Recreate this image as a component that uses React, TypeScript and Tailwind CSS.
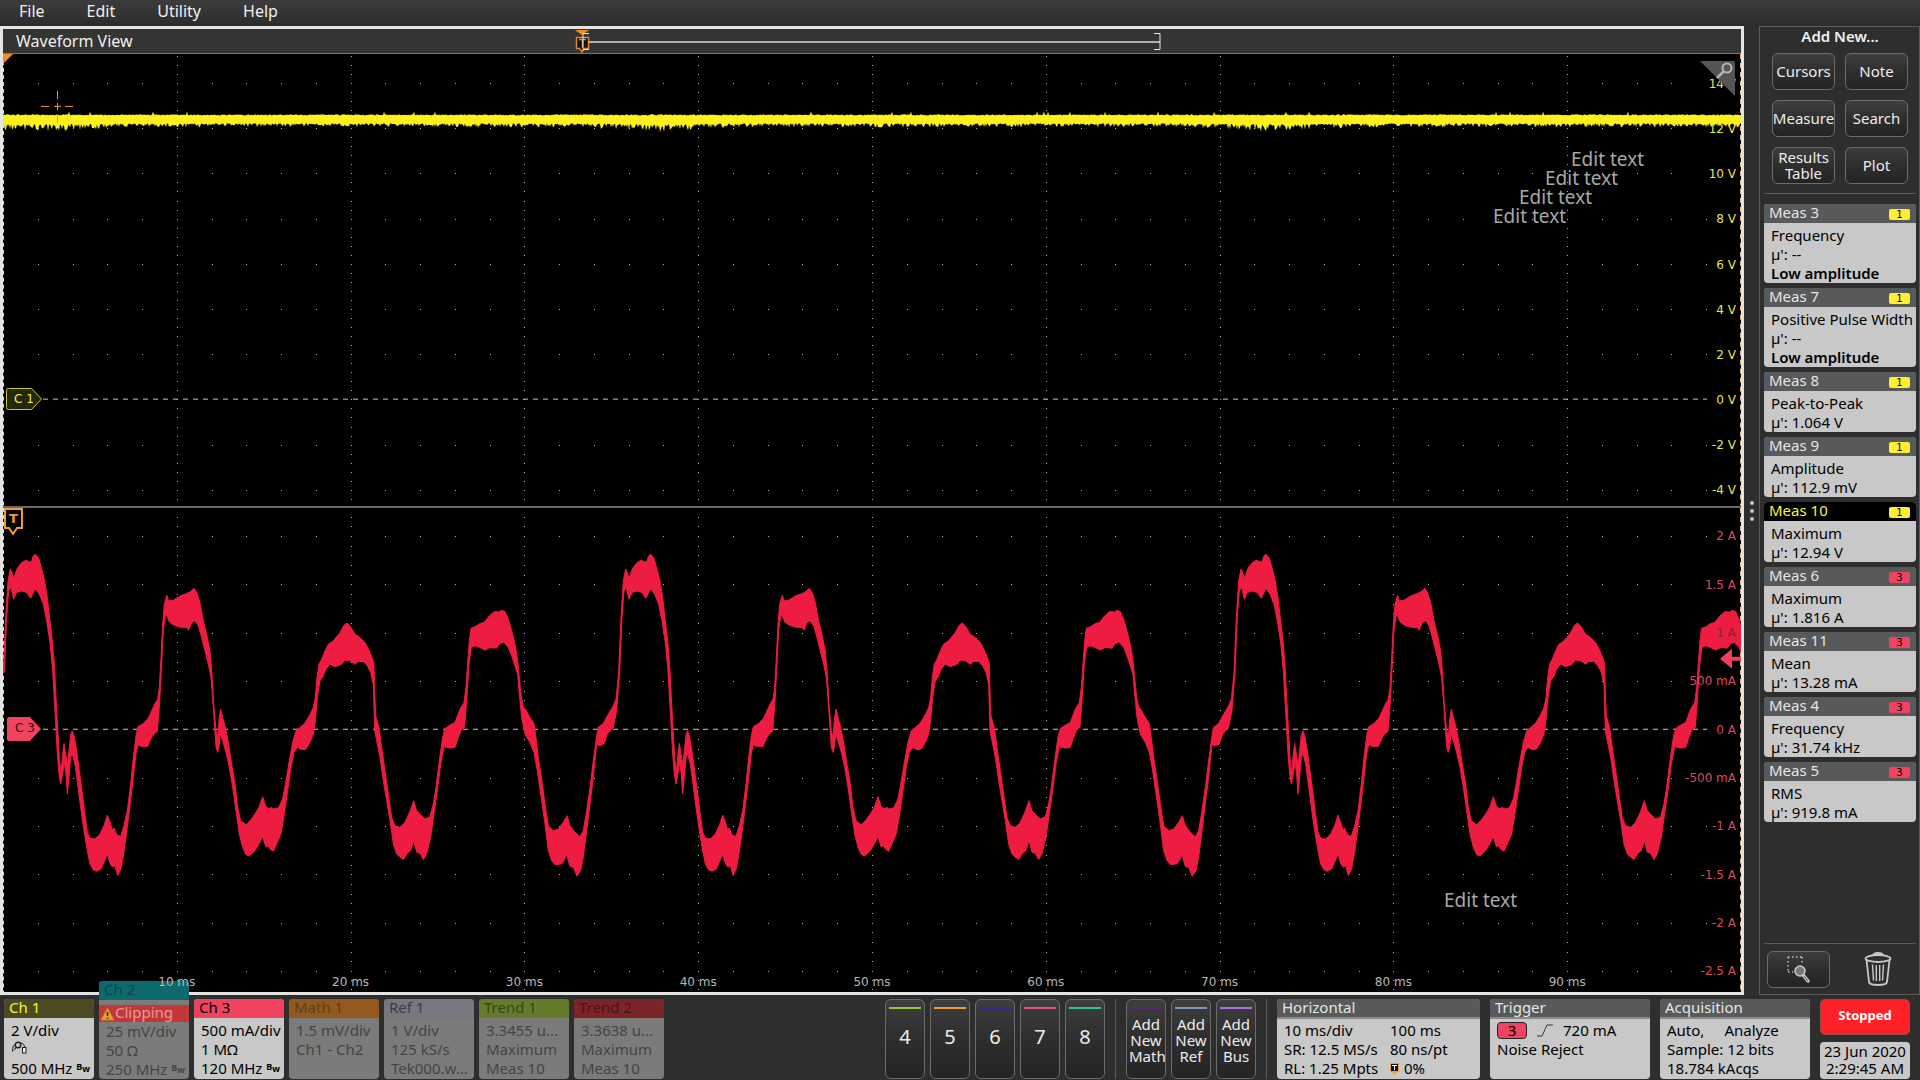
import React from 'react';
import clsx from 'clsx';

const DIVS = 10;
const PLOT_W = 1738;
const TOP_H = 452;
const BOTTOM_H = 485;

// One period of the current waveform: upper edge, then lower edge
const PERIOD = 1846;
const UPPER = [
  10, 545, 17, 380, 24, 270, 31, 234, 36, 245, 41, 262, 52, 232, 65, 215, 78, 208, 88, 213, 95, 212, 99, 196, 106, 190,
  115, 200, 122, 222, 133, 265, 142, 320, 150, 390, 157, 450, 163, 520, 168, 620, 173, 710, 178, 800, 183, 845, 188, 790,
  192, 758, 197, 790, 203, 822, 207, 780, 212, 732, 217, 720, 223, 738, 230, 780, 238, 840, 246, 900, 254, 965, 262, 1025,
  270, 1042, 285, 1045, 300, 1030, 312, 1005, 322, 973, 332, 1000, 337, 1018, 342, 1012, 350, 1032, 362, 1037, 372, 1005,
  382, 960, 392, 880, 400, 800, 408, 735, 414, 708, 430, 698, 445, 682, 455, 660, 465, 638, 473, 625, 478, 590, 483, 500,
  488, 400, 493, 340, 501, 313, 506, 330, 520, 328, 540, 315, 560, 308, 572, 302, 582, 292, 592, 308, 600, 335, 610, 390,
  622, 440, 630, 480, 636, 550, 641, 640, 648, 720, 653, 740, 657, 690, 662, 655, 668, 680, 675, 705, 685, 755, 695, 820,
  705, 880, 713, 950, 722, 990, 738, 1002, 752, 988, 765, 970, 777, 950, 788, 918, 797, 945, 805, 955, 815, 950, 820, 955,
  835, 952, 848, 925, 858, 870, 868, 810, 878, 755, 888, 720, 900, 710, 915, 697, 930, 672, 940, 650, 946, 620, 951, 560,
  957, 520, 965, 505, 975, 480, 985, 460, 1000, 450, 1020, 425, 1032, 403, 1041, 396, 1052, 408, 1065, 430, 1080, 440,
  1095, 455, 1108, 480, 1118, 505, 1122, 520, 1124, 600, 1127, 675, 1137, 710, 1145, 770, 1155, 840, 1165, 910, 1175, 980,
  1185, 1005, 1200, 1010, 1215, 995, 1230, 962, 1241, 930, 1250, 960, 1262, 972, 1275, 985, 1290, 978, 1300, 940, 1308, 890,
  1318, 810, 1328, 740, 1335, 713, 1350, 703, 1365, 695, 1380, 655, 1392, 635, 1398, 590, 1403, 520, 1408, 450, 1413, 412,
  1425, 408, 1440, 398, 1452, 395, 1468, 375, 1483, 362, 1490, 362, 1497, 364, 1503, 358, 1515, 362, 1525, 385, 1535, 420,
  1545, 460, 1552, 500, 1558, 560, 1564, 620, 1570, 648, 1578, 658, 1590, 680, 1602, 698, 1608, 740, 1615, 800, 1625, 865,
  1635, 940, 1645, 1005, 1660, 1020, 1675, 1015, 1690, 995, 1701, 975, 1710, 1005, 1725, 1025, 1740, 1038, 1750, 1020,
  1760, 960, 1770, 890, 1780, 810, 1788, 750, 1794, 710, 1810, 698, 1825, 670, 1840, 645, 1848, 625,
];
const LOWER = [
  13, 545, 20, 380, 26, 300, 33, 290, 41, 325, 50, 305, 65, 300, 80, 305, 92, 322, 103, 298, 108, 295, 118, 310, 130, 340,
  140, 390, 150, 455, 158, 540, 166, 680, 172, 790, 177, 850, 182, 880, 188, 850, 193, 815, 198, 850, 202, 910, 207, 860,
  212, 800, 217, 790, 225, 820, 233, 880, 242, 950, 252, 1020, 262, 1080, 270, 1120, 280, 1138, 290, 1142, 303, 1135,
  312, 1115, 322, 1090, 330, 1118, 338, 1130, 345, 1125, 353, 1155, 363, 1135, 372, 1085, 382, 1010, 392, 930, 400, 860,
  408, 790, 414, 762, 425, 767, 443, 767, 455, 740, 462, 730, 472, 722, 478, 650, 484, 540, 490, 420, 496, 375, 500, 372,
  508, 393, 520, 402, 535, 408, 550, 410, 560, 410, 566, 418, 575, 395, 585, 390, 595, 405, 605, 440, 615, 480, 625, 520,
  633, 560, 640, 650, 648, 770, 653, 785, 657, 770, 661, 730, 668, 750, 678, 785, 688, 830, 698, 890, 708, 960, 718, 1030,
  728, 1070, 738, 1092, 748, 1096, 765, 1080, 777, 1060, 788, 1038, 797, 1068, 805, 1065, 810, 1075, 820, 1082, 830, 1060,
  843, 1030, 853, 970, 863, 900, 873, 830, 882, 785, 892, 770, 905, 777, 918, 775, 930, 755, 940, 730, 946, 690, 952, 620,
  960, 570, 968, 560, 978, 535, 990, 520, 1005, 528, 1025, 520, 1035, 508, 1050, 510, 1065, 520, 1075, 512, 1090, 512,
  1102, 525, 1112, 545, 1120, 580, 1124, 720, 1130, 750, 1140, 800, 1150, 870, 1160, 930, 1170, 990, 1180, 1060, 1190, 1090,
  1200, 1100, 1210, 1107, 1220, 1090, 1232, 1080, 1241, 1050, 1250, 1085, 1260, 1088, 1270, 1107, 1280, 1090, 1292, 1040,
  1302, 970, 1312, 900, 1322, 820, 1332, 768, 1350, 772, 1365, 770, 1375, 740, 1385, 715, 1394, 710, 1400, 630, 1407, 520,
  1414, 470, 1425, 465, 1440, 470, 1455, 478, 1470, 470, 1490, 472, 1500, 458, 1512, 455, 1525, 470, 1535, 495, 1545, 525,
  1553, 550, 1558, 610, 1565, 680, 1575, 730, 1590, 755, 1602, 785, 1612, 840, 1625, 930, 1635, 1000, 1645, 1080,
  1655, 1110, 1665, 1122, 1685, 1120, 1692, 1110, 1700, 1092, 1710, 1128, 1720, 1130, 1731, 1157, 1742, 1140, 1750, 1100,
  1760, 1020, 1770, 940, 1780, 860, 1790, 762, 1800, 765, 1812, 760, 1822, 730, 1840, 710, 1850, 660,
];

const toPairs = (flat: number[]) => {
  const out: string[] = [];
  for (let i = 0; i < flat.length; i += 2) out.push(`${flat[i]} ${flat[i + 1]}`);
  return out;
};

const currentPath = `M${[...toPairs(UPPER), `${PERIOD + 10} 545`, `${PERIOD + 13} 545`, ...toPairs(LOWER).reverse()].join('L')}Z`;

// Deterministic noise so the trace looks the same on every render
const noise = (n: number) => {
  const s = Math.sin(n * 127.1) * 43758.5453;
  return s - Math.floor(s);
};

const voltagePath = () => {
  const upper: string[] = [];
  const lower: string[] = [];
  for (let x = 0; x <= PLOT_W; x++) {
    const phase = ((x + 280) % 615) / 615;
    const burst = Math.max(0, 1 - Math.abs(phase - 0.52) * 7);
    const up = noise(x) > 0.985 ? 4 : noise(x + 0.5) * 1.2;
    const down = noise(x + 9000) ** 2 * (4 + burst * 4);
    upper.push(`${x} ${(61.5 - up).toFixed(1)}`);
    lower.push(`${x} ${(69.5 + down + burst).toFixed(1)}`);
  }
  return `M${[...upper, ...lower.reverse()].join('L')}Z`;
};

interface AxisLabel {
  text: string;
  y: number;
}

const makeAxis = (texts: string[], first: number, step: number): AxisLabel[] =>
  texts.map((text, i) => ({ text, y: first + i * step }));

const voltAxis = makeAxis(['14 V', '12 V', '10 V', '8 V', '6 V', '4 V', '2 V', '0 V', '-2 V', '-4 V'], 29, 45.2);
const ampAxis = makeAxis(
  ['2 A', '1.5 A', '1 A', '500 mA', '0 A', '-500 mA', '-1 A', '-1.5 A', '-2 A', '-2.5 A'],
  28,
  48.35,
);

const gridPath = (axis: AxisLabel[], step: number, height: number) => {
  let d = '';
  const dot = (x: number, y: number) => {
    d += `M${Math.round(x)} ${Math.round(y)}h1v1h-1z`;
  };
  const minor = step / 5;
  for (let i = 1; i < DIVS; i++) {
    for (let y = axis[0].y % minor; y < height; y += minor) dot((i * PLOT_W) / DIVS, y);
  }
  axis.forEach(({ text, y }) => {
    if (text.startsWith('0')) return;
    const last = text.replace('-', '').length > 3 ? 48 : 49;
    for (let i = 1; i <= last; i++) dot((i * PLOT_W) / 50, y);
  });
  return d;
};

interface PaneProps {
  axis: AxisLabel[];
  step: number;
  height: number;
  zero: number;
  labelClass: string;
  children: React.ReactNode;
}

const Pane: React.FC<PaneProps> = ({ axis, step, height, zero, labelClass, children }) => (
  <>
    <svg
      className="absolute inset-0 w-full h-full"
      viewBox={`0 0 ${PLOT_W} ${height}`}
      preserveAspectRatio="none"
      aria-hidden="true"
    >
      <path d={gridPath(axis, step, height)} fill="#b4b4b4" shapeRendering="crispEdges" />
      <path d={`M40 ${zero}H1704`} stroke="#c8c8c8" strokeDasharray="5 5" shapeRendering="crispEdges" />
      <path d={`M0.5 0V${height}`} stroke="#dcdcdc" strokeDasharray="4 3" />
      <path d={`M1737.5 0V${height}`} stroke="#f0b080" strokeDasharray="5 4" />
      {children}
    </svg>
    {axis.map(({ text, y }) => (
      <span
        key={text}
        className={clsx(
          'absolute right-[5px] -translate-y-[6px] text-[12px] leading-[14px]',
          text === '1 A' ? 'text-[#8c1c30]' : labelClass,
        )}
        style={{ top: `${(y / height) * 100}%` }}
      >
        {text}
      </span>
    ))}
  </>
);

const Note: React.FC<{ x: number; y: number }> = ({ x, y }) => (
  <span
    className="absolute font-['Noto_Sans'] text-[19px] leading-[18px] text-[#a8a8a8] whitespace-nowrap"
    style={{ left: `${(x / PLOT_W) * 100}%`, top: y }}
  >
    Edit text
  </span>
);

const WaveformView: React.FC = () => (
  <main className="flex-1 min-w-0 flex flex-col border-[3px] border-[#e4e4e2] bg-black">
    <header className="h-[25px] flex items-center bg-[#343432] border-b border-[#777]">
      <h1 className="w-[569px] pl-[13px] text-[16px] leading-[22px] text-[#f0f0f0]">Waveform View</h1>
      <svg width="590" height="24" viewBox="0 0 590 24" fill="none" aria-hidden="true">
        <path d="M3 1h14l-7 5z" fill="#f58b1f" />
        <path d="M4.500 8.500h12v11h-4l-2.500 3.500-2.500-3.500h-3z" fill="#111" stroke="#d9883a" strokeWidth="1.500" />
        <path d="M7 10.500h7M10.500 10.500v8" stroke="#d9883a" strokeWidth="1.500" />
        <path d="M17 4.500h-6v16h6" stroke="#e8e8e8" />
        <path d="M17 13H588" stroke="#b0b0ae" strokeWidth="2" />
        <path d="M582 4.500h6v16h-6" stroke="#e8e8e8" />
      </svg>
    </header>

    {/* Voltage pane */}
    <section className="relative grow-[452] basis-0 border-b-2 border-[#6a6a6a]" aria-label="Channel 1">
      <Pane axis={voltAxis} step={45.2} height={TOP_H} zero={345.5} labelClass="text-[#e6e64c]">
        <path d={voltagePath()} fill="#fff01c" />
        <path d="M0 0h10L0 10z" fill="#f58b1f" />
        <path
          d="M54.500 37v8M54.500 49v7M54.500 61v8M38 52.500h8M51 52.500h7M62 52.500h8"
          stroke="#f0963c"
          shapeRendering="crispEdges"
        />
      </Pane>
      <Note x={1568} y={96} />
      <Note x={1542} y={115} />
      <Note x={1516} y={134} />
      <Note x={1490} y={153} />
      <svg className="absolute left-[3px] top-[76.4%] -translate-y-1/2" width="37" height="23" viewBox="0 0 37 23">
        <path d="M2.500 1h23l10 10.500-10 10.500h-23q-2 0-2-2V3q0-2 2-2z" fill="#26260c" stroke="#c8c832" />
        <text x="8" y="15.500" fontSize="12" fill="#f0f050">C 1</text>
      </svg>
      <button className="absolute right-[6px] top-[7px]" aria-label="Zoom">
        <svg width="35" height="35" viewBox="0 0 35 35" fill="none">
          <path d="M0 0h33q2 0 2 2v33z" fill="#555" />
          <circle cx="27" cy="7" r="4.500" stroke="#b4b4b4" strokeWidth="2" />
          <path d="M23.500 10.500L17 17" stroke="#b4b4b4" strokeWidth="2.500" />
        </svg>
      </button>
    </section>

    {/* Current pane */}
    <section className="relative grow-[485] basis-0" aria-label="Channel 3">
      <Pane axis={ampAxis} step={48.35} height={BOTTOM_H} zero={221.5} labelClass="text-[#d94a60]">
        <g transform="translate(-3 -17) scale(0.33333)" fill="#ee1c40" stroke="#ee1c40" strokeWidth="3">
          {[0, 1, 2].map((n) => (
            <path key={n} d={currentPath} transform={`translate(${n * PERIOD} 0)`} />
          ))}
        </g>
        <path d="M1717 151l12-10v8h9v4h-9v8z" fill="#f0405c" />
      </Pane>
      <Note x={1441} y={383} />
      {['10', '20', '30', '40', '50', '60', '70', '80', '90'].map((t, i) => (
        <span
          key={t}
          className="absolute z-10 bottom-[3px] -translate-x-1/2 text-[12px] leading-[14px] text-[#b8b8b8] whitespace-nowrap"
          style={{ left: `${(i + 1) * 10}%` }}
        >
          {t} ms
        </span>
      ))}
      <svg className="absolute left-0 top-0" width="22" height="28" viewBox="0 0 22 28">
        <path d="M2 1h17v19h-5l-4 6-4-6H2z" fill="#000" stroke="#f09a3c" strokeWidth="2" />
        <text x="10.500" y="15" fontSize="13" fontWeight="bold" textAnchor="middle" fill="#f09a3c">T</text>
      </svg>
      <svg className="absolute left-[4px] top-[45.8%] -translate-y-1/2" width="35" height="24" viewBox="0 0 35 24">
        <path d="M2 0h21l11 12-11 12H2q-2 0-2-2V2q0-2 2-2z" fill="#f0435f" />
        <text x="8" y="15" fontSize="12" fill="#38060f">C 3</text>
      </svg>
    </section>
  </main>
);

const panelButton =
  'flex items-center justify-center rounded-[6px] border border-[#6c6c6c] bg-gradient-to-b from-[#3e3e3e] via-[#2e2e2e] to-[#242424] text-[#ececec]';

interface Meas {
  name: string;
  source: 1 | 3;
  lines: string[];
  warning?: string;
  active?: boolean;
}

const measurements: Meas[] = [
  { name: 'Meas 3', source: 1, lines: ['Frequency', "µ': --"], warning: 'Low amplitude' },
  { name: 'Meas 7', source: 1, lines: ['Positive Pulse Width', "µ': --"], warning: 'Low amplitude' },
  { name: 'Meas 8', source: 1, lines: ['Peak-to-Peak', "µ': 1.064 V"] },
  { name: 'Meas 9', source: 1, lines: ['Amplitude', "µ': 112.9 mV"] },
  { name: 'Meas 10', source: 1, lines: ['Maximum', "µ': 12.94 V"], active: true },
  { name: 'Meas 6', source: 3, lines: ['Maximum', "µ': 1.816 A"] },
  { name: 'Meas 11', source: 3, lines: ['Mean', "µ': 13.28 mA"] },
  { name: 'Meas 4', source: 3, lines: ['Frequency', "µ': 31.74 kHz"] },
  { name: 'Meas 5', source: 3, lines: ['RMS', "µ': 919.8 mA"] },
];

const MeasCard: React.FC<{ meas: Meas }> = ({ meas }) => (
  <section className="rounded-[4px] bg-[#c8c8c8] text-black">
    <header
      className={clsx(
        'h-[19px] pl-[5px] pr-[6px] flex items-start justify-between rounded-t-[4px] text-[15px] leading-[17px]',
        meas.active ? 'bg-black text-[#f5f53c]' : 'bg-[#58595b] text-[#e6e6e6]',
      )}
    >
      <h2>{meas.name}</h2>
      <span
        className={clsx(
          "w-[21px] h-[11px] mt-[5px] rounded-[2px] text-center font-['DejaVu_Sans'] text-[10px] leading-[11px] text-black",
          meas.source === 1 ? 'bg-[#ffee32]' : 'bg-[#f0435f]',
        )}
      >
        {meas.source}
      </span>
    </header>
    <div className="pl-[7px] pt-[3px] text-[15px] leading-[19px] whitespace-nowrap">
      {meas.lines.map((line) => (
        <p key={line}>{line}</p>
      ))}
      {meas.warning && <p className="font-semibold">{meas.warning}</p>}
    </div>
  </section>
);

const Sidebar: React.FC = () => (
  <aside className="w-[161px] shrink-0 flex flex-col border border-[#5c5c5c] pl-[4px] pr-[3px]">
    <h2 className="text-center text-[15px] leading-[18px] font-semibold text-[#f0f0f0]">Add New...</h2>
    <div className="mt-[8px] px-[8px] grid grid-cols-2 gap-[10px]">
      {['Cursors', 'Note', 'Measure', 'Search', 'Results Table', 'Plot'].map((label) => (
        <button key={label} className={clsx(panelButton, 'h-[37px] pb-px text-[15px] leading-[16px]')}>
          {label}
        </button>
      ))}
    </div>
    <hr className="mt-[9px] border-[#5c5c5c]" />
    <div className="mt-[10px] flex flex-col gap-[5px]">
      {measurements.map((m) => (
        <MeasCard key={m.name} meas={m} />
      ))}
    </div>
    <div className="mt-auto h-[51px] border-t border-[#5c5c5c] flex items-center gap-[34px] pl-[3px]">
      <button className={clsx(panelButton, 'w-[63px] h-[37px]')} aria-label="Zoom to area">
        <svg width="26" height="32" viewBox="0 0 26 32" fill="none">
          <path d="M2 4h14M2 4v15M16 4v8M2 19h5" stroke="#c0c0c0" strokeWidth="1.500" strokeDasharray="1.500 2.500" />
          <circle cx="14" cy="18" r="5" fill="#777" stroke="#c8c8c8" strokeWidth="1.500" />
          <path d="M17.500 22.500L22 28" stroke="#c8c8c8" strokeWidth="3.500" strokeLinecap="round" />
          <path d="M18 23L22 28" stroke="#555" strokeWidth="1" />
        </svg>
      </button>
      <button aria-label="Delete">
        <svg width="28" height="34" viewBox="0 0 28 34" fill="none" stroke="#c8c8c8" strokeWidth="1.800">
          <path d="M2.500 8l2.500 22q.5 3 9 3t9-3L25.500 8" />
          <ellipse cx="14" cy="6.500" rx="12.500" ry="3.500" />
          <path d="M9 4q0-3 5-3t5 3" />
          <path d="M8.500 12.500l1 16M12.300 13v16M15.700 13v16M19.500 12.500l-1 16" strokeWidth="1.400" />
        </svg>
      </button>
    </div>
  </aside>
);

interface BadgeProps {
  title: string;
  header: string;
  lines: React.ReactNode[];
  dim?: boolean;
}

const Bw = () => (
  <span className="ml-auto mr-[4px] flex text-[9px] font-bold">
    <span className="leading-[15px]">B</span>
    <span className="leading-[20px]">w</span>
  </span>
);

const Badge: React.FC<BadgeProps> = ({ title, header, lines, dim }) => (
  <section
    className={clsx(
      'w-[90px] h-[80px] shrink-0 rounded-[4px]',
      dim ? 'bg-[#7b7b7b] text-[#444]' : 'bg-[#c8c8c8] text-black',
    )}
  >
    <h2 className={clsx('h-[19px] pl-[5px] rounded-t-[4px] text-[15px] leading-[17px]', header)}>{title}</h2>
    <div className="pl-[7px] pt-[3px] text-[15px] leading-[19px] whitespace-nowrap">
      {lines.map((line, i) => (
        <div key={i} className="h-[19px] flex">
          {line}
        </div>
      ))}
    </div>
  </section>
);

const ProbeIcon = () => (
  <svg className="mt-[1px]" width="17" height="13" viewBox="0 0 17 13" fill="none" stroke="#222">
    <path d="M1.500 9q0-5 3-6M9.500 2q4 0 4 4.500" />
    <circle cx="7" cy="4" r="2.800" strokeWidth="1.400" />
    <path d="M5.500 6L3 9.500M1.500 9v1.500" />
    <rect x="11.500" y="6.500" width="3.500" height="5.500" fill="#eee" />
  </svg>
);

const addButtons = [
  { label: '4', bar: 'bg-[#8fc93a]' },
  { label: '5', bar: 'bg-[#f0983c]' },
  { label: '6', bar: 'bg-[#2f2b90]' },
  { label: '7', bar: 'bg-[#dc508c]' },
  { label: '8', bar: 'bg-[#2cc48c]' },
];

const newButtons = [
  { label: 'Add New Math', bar: 'bg-[#5a2a6c]' },
  { label: 'Add New Ref', bar: 'bg-[#8098b8]' },
  { label: 'Add New Bus', bar: 'bg-[#a874e0]' },
];

const TallButton: React.FC<{ label: string; bar: string; className: string }> = ({ label, bar, className }) => (
  <button className={clsx(panelButton, 'w-[40px] h-[80px] flex-col !justify-start pt-[7px]')}>
    <span className={clsx('w-[32px] h-[2px] shrink-0', bar)} />
    <span className={className}>{label}</span>
  </button>
);

const InfoPanel: React.FC<{ title: string; className: string; children: React.ReactNode }> = ({
  title,
  className,
  children,
}) => (
  <section className={clsx('h-[80px] shrink-0 rounded-[4px] bg-[#c8c8c8] text-black', className)}>
    <h2 className="h-[20px] pl-[5px] rounded-t-[4px] bg-[#58595b] border-b-2 border-[#8a8a8a] text-[15px] leading-[17px] text-[#e6e6e6]">
      {title}
    </h2>
    <div className="px-[7px] pt-[2px] text-[15px] leading-[19px] whitespace-nowrap">{children}</div>
  </section>
);

const BottomBar: React.FC = () => (
  <footer className="relative z-[1] h-[85px] pt-[4px] pl-[4px] pr-[10px] flex items-start justify-between">
    <div className="flex gap-[5px]">
      <Badge
        title="Ch 1"
        header="bg-[#4b4a20] text-[#f5f53c]"
        lines={['2 V/div', <ProbeIcon key="probe" />, <>500 MHz<Bw /></>]}
      />
      {/* Clipping badge rises above the row */}
      <section className="-mt-[18px] w-[90px] h-[98px] shrink-0 rounded-[4px] bg-[#7b7b7b] text-[#444]">
        <h2 className="h-[19px] pl-[5px] rounded-t-[4px] text-[15px] leading-[17px] bg-[#0d6a6c] text-[#0c4648]">Ch 2</h2>
        <div className="mt-[5px] h-[17px] pl-[1px] flex items-center bg-[#c23838] text-[15px] leading-[15px] text-[#e89898]">
          <svg width="15" height="14" viewBox="0 0 15 14">
            <path d="M7.500 1L14 13H1z" fill="#e8a030" stroke="#c88020" />
            <path d="M7.500 5v4M7.500 10.500v1.200" stroke="#222" strokeWidth="1.500" />
          </svg>
          <span className="pb-[2px]">Clipping</span>
        </div>
        <div className="pl-[7px] text-[15px] leading-[19px] whitespace-nowrap">
          <p>25 mV/div</p>
          <p>50 Ω</p>
          <div className="flex">250 MHz<Bw /></div>
        </div>
      </section>
      <Badge title="Ch 3" header="bg-[#f0435f] text-black" lines={['500 mA/div', '1 MΩ', <>120 MHz<Bw /></>]} />
      <Badge dim title="Math 1" header="bg-[#93591f] text-[#59401e]" lines={['1.5 mV/div', 'Ch1 - Ch2']} />
      <Badge dim title="Ref 1" header="bg-[#77777f] text-[#3c3c48]" lines={['1 V/div', '125 kS/s', 'Tek000.w...']} />
      <Badge dim title="Trend 1" header="bg-[#667a2c] text-[#36451a]" lines={['3.3455 u...', 'Maximum', 'Meas 10']} />
      <Badge dim title="Trend 2" header="bg-[#7c2428] text-[#4c1216]" lines={['3.3638 u...', 'Maximum', 'Meas 10']} />
    </div>

    <div className="flex">
      <div className="flex gap-[5px] pr-[10px] border-r border-[#5c5c5c]">
        {addButtons.map((b) => (
          <TallButton key={b.label} {...b} className="mt-[14px] text-[20px] leading-[28px]" />
        ))}
      </div>
      <div className="flex gap-[5px] px-[10px] border-r border-[#5c5c5c]">
        {newButtons.map((b) => (
          <TallButton key={b.label} {...b} className="mt-[7px] w-[34px] text-[15px] leading-[16px]" />
        ))}
      </div>
      <div className="flex gap-[10px] pl-[10px]">
        <InfoPanel title="Horizontal" className="w-[203px]">
          <div className="grid grid-cols-[106px_1fr]">
            <span>10 ms/div</span>
            <span>100 ms</span>
            <span>SR: 12.5 MS/s</span>
            <span>80 ns/pt</span>
            <span>RL: 1.25 Mpts</span>
            <span className="flex items-center gap-[5px]">
              <svg width="9" height="12" viewBox="0 0 9 12">
                <path d="M0 0h9v9H7l-2.500 3L2 9H0z" fill="#f09a3c" />
                <path d="M1 1h7v7H1z" fill="#111" />
                <path d="M2 2.500h5M4.500 2.500v5" stroke="#fff" />
              </svg>
              0%
            </span>
          </div>
        </InfoPanel>
        <InfoPanel title="Trigger" className="w-[160px]">
          <div className="flex items-center">
            <span className="w-[30px] h-[17px] rounded-[4px] border border-[#222] bg-[#f0435f] text-center leading-[15px]">
              3
            </span>
            <svg className="ml-[10px]" width="16" height="13" viewBox="0 0 16 13" fill="none" stroke="#333">
              <path d="M0 12h5L10 1h6" />
            </svg>
            <span className="ml-[10px]">720 mA</span>
          </div>
          <p>Noise Reject</p>
        </InfoPanel>
        <InfoPanel title="Acquisition" className="w-[150px]">
          <div className="flex gap-[20px]">
            <span>Auto,</span>
            <span>Analyze</span>
          </div>
          <p>Sample: 12 bits</p>
          <p>18.784 kAcqs</p>
        </InfoPanel>
        <div className="w-[90px] h-[80px] flex flex-col justify-between">
          <button className="h-[36px] pb-[3px] rounded-[5px] border border-[#a04848] bg-[#ff2028] text-[13px] font-bold text-white">
            Stopped
          </button>
          <time className="h-[37px] pt-px rounded-[4px] bg-[#c8c8c8] text-center text-[15px] leading-[17px] text-black">
            23 Jun 2020
            <br />
            2:29:45 AM
          </time>
        </div>
      </div>
    </div>
  </footer>
);

export default function App() {
  return (
    <div className="min-h-screen flex flex-col bg-[#2e2e2e] font-['Noto_Sans',sans-serif]">
      <nav className="h-[26px] flex items-start gap-[42px] pl-[19px] bg-gradient-to-b from-[#3c3c3c] to-[#2c2c2c] text-[16px] leading-[23px] text-[#f0f0f0]">
        {['File', 'Edit', 'Utility', 'Help'].map((item) => (
          <button key={item}>{item}</button>
        ))}
      </nav>
      <div className="flex-1 flex">
        <div className="flex-1 min-w-0 flex font-['DejaVu_Sans',sans-serif] [&_h1]:font-['Noto_Sans']">
          <WaveformView />
        </div>
        <div className="w-[15px] shrink-0 flex flex-col items-center justify-center gap-[4px]">
          {[0, 1, 2].map((n) => (
            <span key={n} className="w-[4px] h-[4px] rounded-full bg-[#c8c8c8]" />
          ))}
        </div>
        <Sidebar />
      </div>
      <BottomBar />
    </div>
  );
}
